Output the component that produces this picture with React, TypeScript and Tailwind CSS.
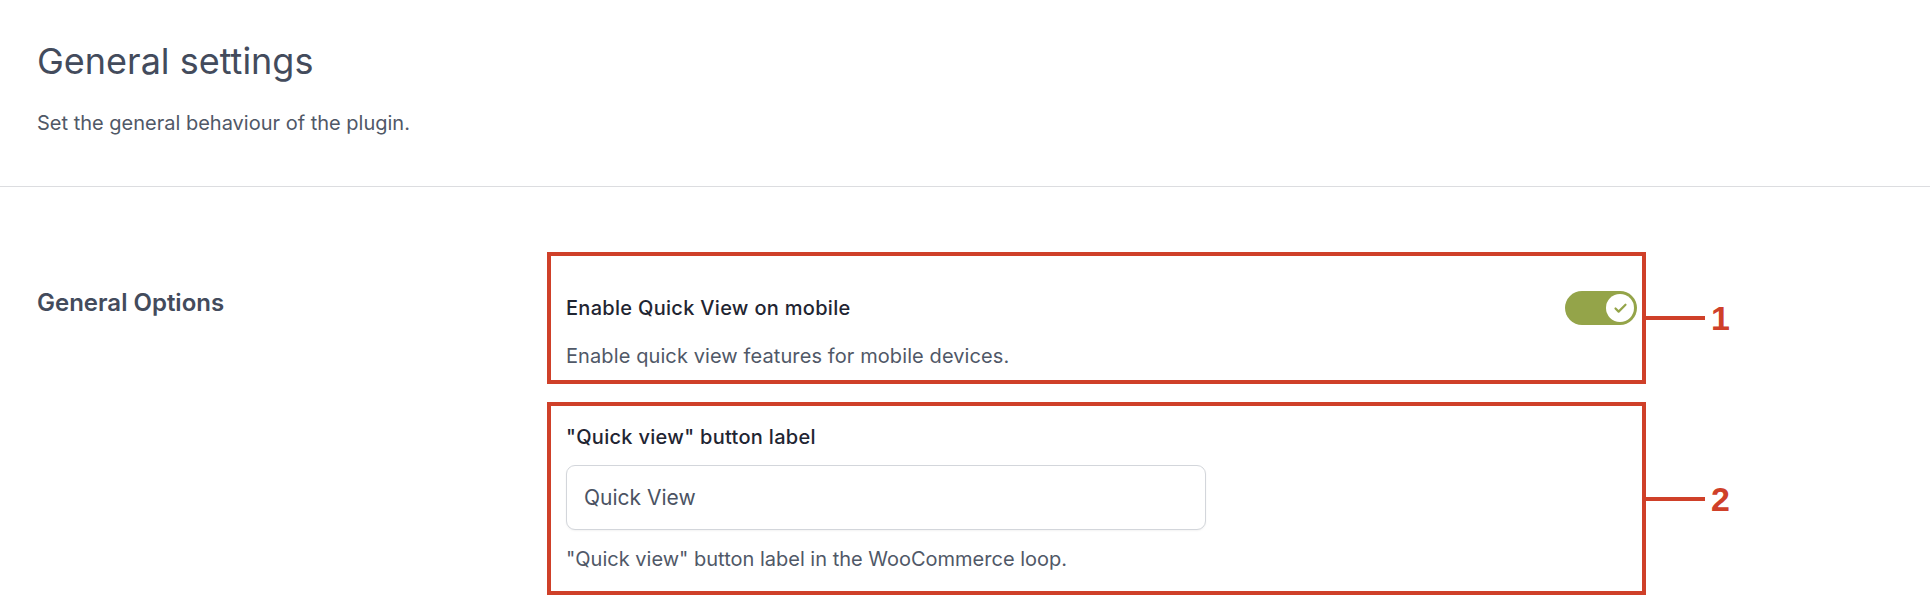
import { Check } from "lucide-react";

const Callout = ({ n }: { n: string }) => (
  <div className="flex items-center">
    <div className="h-[4px] w-[59px] bg-[#cf4029]" />
    <span className="ml-[6px] text-[34px] font-bold leading-none text-[#cf4029] [font-family:'Liberation_Sans',Arial,sans-serif]">
      {n}
    </span>
  </div>
);

const App = () => {
  return (
    <div className="min-h-screen w-[1930px] bg-white text-[#434b5c] [font-family:Inter,'Noto_Sans',sans-serif]">
      <header className="border-b border-[#dcdde0] px-[37px] pt-[40px] pb-[49px]">
        <h1 className="text-[36px] font-normal leading-[43px] text-[#434b5c]">General settings</h1>
        <p className="mt-[26px] text-[20px] leading-[28px] text-[#505867]">
          Set the general behaviour of the plugin.
        </p>
      </header>

      <section className="flex px-[37px] pt-[65px]">
        <div className="w-[510px] shrink-0 pt-[35px]">
          <h2 className="text-[24px] font-semibold leading-[32px] text-[#434b5c]">General Options</h2>
        </div>

        <div className="flex flex-col gap-[18px]">
          <div className="flex items-center">
            <div className="w-[1099px] border-[4px] border-[#cf4029] pt-[35px] pr-[5px] pb-[10px] pl-[15px]">
              <div className="flex items-center justify-between">
                <span className="text-[20px] font-medium leading-[28px] tracking-[0.3px] text-[#1f2532]">
                  Enable Quick View on mobile
                </span>
                <div className="flex h-[34px] w-[72px] items-center justify-end rounded-full bg-[#94a449] pr-[3px]">
                  <div className="flex h-[28px] w-[28px] items-center justify-center rounded-full bg-white">
                    <Check className="h-[15px] w-[15px] text-[#94a449]" strokeWidth={3.5} />
                  </div>
                </div>
              </div>
              <p className="mt-[17px] text-[20px] leading-[28px] tracking-[0.1px] text-[#505867]">
                Enable quick view features for mobile devices.
              </p>
            </div>
            <Callout n="1" />
          </div>

          <div className="flex items-center">
            <div className="w-[1099px] border-[4px] border-[#cf4029] pt-[17px] pr-[15px] pb-[18px] pl-[15px]">
              <label className="block text-[20px] font-medium leading-[28px] tracking-[0.3px] text-[#1f2532]">
                "Quick view" button label
              </label>
              <input
                type="text"
                defaultValue="Quick View"
                className="mt-[14px] block h-[65px] w-[640px] rounded-[9px] border border-[#d3d6db] bg-white px-[17px] text-[21px] text-[#4b5363] shadow-[0_1px_2px_rgba(0,0,0,0.05)] outline-none"
              />
              <p className="mt-[15px] text-[20px] leading-[28px] text-[#505867]">
                "Quick view" button label in the WooCommerce loop.
              </p>
            </div>
            <Callout n="2" />
          </div>
        </div>
      </section>
    </div>
  );
};

export default App;
